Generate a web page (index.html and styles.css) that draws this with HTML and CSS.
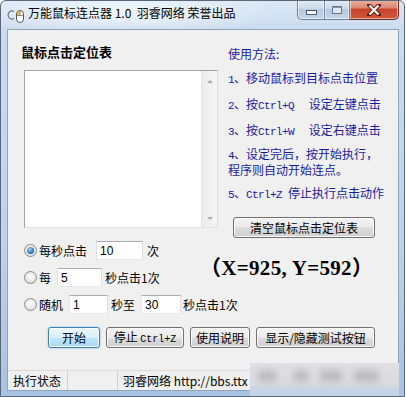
FILE: index.html
```html
<!doctype html>
<html>
	<head>
		<meta charset="utf-8" />
		<title>万能鼠标连点器 1.0</title>
		<link rel="stylesheet" href="styles.css">
	</head>
	<body>
		<div class="window">
			<div class="titlebar">
				<svg class="appicon" width="18" height="18" viewBox="0 0 18 18">
					<path d="M7 5.5 A4 4 0 1 0 7 12.5" fill="none" stroke="#707070" stroke-width="1.2" />
					<rect x="9.5" y="4.5" width="7" height="12" rx="3.5" fill="#fff" stroke="#555" />
					<path d="M13 5 A3 3 0 0 0 10 8 V9.5 H13 Z" fill="#f2c21b" />
					<path d="M13 4.5 V9.5 M9.5 9.5 H16.5" stroke="#777" stroke-width=".8" />
				</svg>
				<span class="title">万能鼠标连点器 1.0&nbsp; 羽睿网络 荣誉出品</span>
				<div class="caption">
					<span class="cbtn min"><i></i></span>
					<span class="cbtn max"><i></i></span>
					<span class="cbtn close">
						<svg width="14" height="12" viewBox="0 0 14 12">
							<path d="M2 1 L12 11 M12 1 L2 11" stroke="#5a1d14" stroke-width="4" stroke-linecap="square" />
							<path d="M2.5 1.5 L11.5 10.5 M11.5 1.5 L2.5 10.5" stroke="#fff" stroke-width="2.2" />
						</svg>
					</span>
				</div>
			</div>

			<div class="client">
				<div class="top">
					<div class="list-panel">
						<h1>鼠标点击定位表</h1>
						<div class="listbox">
							<div class="scroll"><span class="arr up"></span><span class="arr down"></span></div>
						</div>
					</div>
					<div class="help">
						<p>使用方法:</p>
						<p><span class="mono">1</span>、移动鼠标到目标点击位置</p>
						<p><span class="mono">2</span>、按<span class="mono">Ctrl+Q&nbsp;&nbsp;</span> 设定左键点击</p>
						<p><span class="mono">3</span>、按<span class="mono">Ctrl+W&nbsp;&nbsp;</span> 设定右键点击</p>
						<p class="two"><span class="mono">4</span>、设定完后，按开始执行，<br>程序则自动开始连点。</p>
						<p class="last"><span class="mono">5</span>、<span class="mono">Ctrl+Z </span>停止执行点击动作</p>
						<button class="btn clear">清空鼠标点击定位表</button>
					</div>
				</div>

				<div class="middle">
					<div class="row r1">
						<span class="radio on"></span><span>每秒点击</span>
						<input class="field f1" type="text" value="10"><span>次</span>
					</div>
					<div class="row r2">
						<span class="radio"></span><span>每</span>
						<input class="field f2" type="text" value="5"><span>秒点击1次</span>
					</div>
					<div class="coords">（X=925, Y=592）</div>
					<div class="row r3">
						<span class="radio"></span><span>随机</span>
						<input class="field f3" type="text" value="1"><span>秒至</span>
						<input class="field f4" type="text" value="30"><span>秒点击1次</span>
					</div>
				</div>

				<div class="actions">
					<button class="btn focus b-start">开始</button>
					<button class="btn b-stop">停止 <span class="mono">Ctrl+Z</span></button>
					<button class="btn b-help">使用说明</button>
					<button class="btn b-toggle">显示/隐藏测试按钮</button>
				</div>

				<div class="status">
					<span class="cell c1">执行状态</span>
					<span class="cell c2"></span>
					<span class="cell c3">羽睿网络 http://bbs.ttx</span>
				</div>
			</div>

			<!-- blurred watermark over the corner -->
			<div class="watermark">
				<span class="blob" style="left:8px;width:18px"></span>
				<span class="blob" style="left:44px;width:14px"></span>
				<span class="blob" style="left:70px;width:22px"></span>
				<span class="blob" style="left:104px;width:24px"></span>
			</div>
		</div>
	</body>
</html>
```

FILE: styles.css
```css
body {
	margin: 0;
	background: #fff;
	font-family: "Noto Sans CJK SC", sans-serif;
	font-size: 12px;
	color: #000;
}
.window {
	position: relative;
	width: 405px;
	height: 397px;
	box-sizing: border-box;
	border: 1px solid #59677a;
	border-radius: 6px 6px 0 0;
	background: linear-gradient(to bottom, #dce8f5 0, #c9dbef 30px, #bed3ea 60%, #a9c3e0 100%);
	display: flex;
	flex-direction: column;
	overflow: hidden;
}
.titlebar {
	height: 29px;
	flex-shrink: 0;
	display: flex;
	align-items: flex-start;
	background: radial-gradient(ellipse 160px 22px at 120px 12px, rgba(255,255,255,.7), rgba(255,255,255,0));
}
.appicon {
	margin: 5px 3px 0 6px;
}
.title {
	margin-top: 5px;
	line-height: 14px;
	font-size: 12px;
}
.caption {
	margin-left: auto;
	margin-right: 5px;
	margin-top: -1px;
	display: flex;
}
.cbtn {
	height: 20px;
	box-sizing: border-box;
	border: 1px solid #6f8298;
	border-top: none;
	display: flex;
	align-items: center;
	justify-content: center;
	box-shadow: inset 0 0 0 1px rgba(255,255,255,.55);
}
.cbtn.min {
	width: 27px;
	border-radius: 0 0 0 5px;
	border-right: none;
	background: linear-gradient(#e4ecf5 0, #ccdaea 45%, #b5c8de 50%, #c5d6e9 100%);
}
.cbtn.max {
	width: 26px;
	background: linear-gradient(#e4ecf5 0, #ccdaea 45%, #b5c8de 50%, #c5d6e9 100%);
}
.cbtn.min i {
	width: 9px;
	height: 3px;
	margin-top: 6px;
	background: #fff;
	border: 1px solid #4a5868;
}
.cbtn.max i {
	width: 8px;
	height: 6px;
	border: 1px solid #6a7a8c;
	background: #dfe8f2;
	box-shadow: inset 0 1px 0 #8898aa;
}
.cbtn.close {
	width: 49px;
	border-color: #6b2a20;
	border-left: none;
	border-radius: 0 0 5px 0;
	background: linear-gradient(#eab0a2 0, #dc8a73 40%, #c8432b 50%, #d2583c 100%);
}
.client {
	margin: 0 6px 6px 7px;
	height: 360px;
	flex-shrink: 0;
	background: #f0f0f0;
	outline: 1px solid #8fa4bb;
}
.top {
	display: flex;
	height: 200px;
}
.list-panel {
	width: 210px;
	box-sizing: border-box;
	padding: 14px 0 0 13px;
}
h1 {
	margin: 0;
	font-size: 13px;
	font-weight: bold;
	line-height: 16px;
}
.listbox {
	margin: 10px 0 0 3px;
	width: 194px;
	height: 158px;
	box-sizing: border-box;
	border: 1px solid #a3a3a3;
	border-right-color: #dcdcdc;
	border-bottom-color: #e3e3e3;
	background: #fff;
	display: flex;
	justify-content: flex-end;
}
.scroll {
	width: 15px;
	border-left: 1px solid #e6e6e6;
	background: linear-gradient(to right, #ebebeb, #f6f6f6);
	display: flex;
	flex-direction: column;
	justify-content: space-between;
	align-items: center;
	padding: 9px 0 7px;
}
.arr {
	width: 0;
	height: 0;
	border-left: 3px solid transparent;
	border-right: 3px solid transparent;
}
.arr.up {
	border-bottom: 3px solid #a8a8a8;
}
.arr.down {
	border-top: 3px solid #a8a8a8;
}
.help {
	margin-left: 10px;
	padding-top: 12px;
	color: #1a1aa6;
}
.help p {
	margin: 0;
	line-height: 24px;
	white-space: nowrap;
}
.help p.two {
	margin-top: 3px;
	line-height: 14px;
}
.help p.last {
	margin-top: 4px;
}
.mono {
	font-family: "Liberation Mono", monospace;
	font-size: 10px;
}
.help .mono {
	font-size: 11px;
	letter-spacing: -0.6px;
}
.btn {
	height: 21px;
	box-sizing: border-box;
	padding: 0;
	border: 1px solid #707070;
	border-radius: 3px;
	background: linear-gradient(#f2f2f2 0, #ebebeb 50%, #dddddd 50%, #cfcfcf 100%);
	box-shadow: inset 0 0 0 1px #fbfbfb;
	font-family: "Noto Sans CJK SC", sans-serif;
	font-size: 12px;
	line-height: 18px;
	color: #000;
}
.btn.focus {
	border-color: #3c7fb1;
	background: linear-gradient(#eaf6fd 0, #d9f0fc 50%, #bee6fd 50%, #a7d9f5 100%);
	box-shadow: inset 0 0 0 1px #fff, 0 0 2px #6fb6e8;
}
.btn.clear {
	margin: 10px 0 0 5px;
	width: 142px;
}
.middle {
	display: grid;
	grid-template-columns: 192px 1fr;
	grid-template-rows: 27px 27px 27px;
	margin-top: 7px;
}
.row {
	display: flex;
	align-items: center;
	padding-left: 16px;
	white-space: nowrap;
}
.row.r3 {
	grid-column: 1 / -1;
}
.radio {
	position: relative;
	width: 13px;
	height: 13px;
	box-sizing: border-box;
	border: 1px solid #8a8a8a;
	border-radius: 50%;
	background: radial-gradient(circle at 50% 40%, #fff, #d4d4d4);
	margin-right: 2px;
	flex-shrink: 0;
}
.radio.on::after {
	content: "";
	position: absolute;
	inset: 2px;
	border-radius: 50%;
	background: radial-gradient(circle at 40% 35%, #a6d8f6, #1d64ad 70%);
}
.field {
	height: 19px;
	box-sizing: border-box;
	border: 1px solid;
	border-color: #abadb3 #dbdfe6 #e3e9ef #e2e3ea;
	background: #fff;
	padding: 0 3px;
	font-family: "Liberation Sans", sans-serif;
	font-size: 12px;
	color: #000;
}
.f1 {
	width: 47px;
	margin: 0 4px 0 9px;
}
.f2 {
	width: 45px;
	margin: 0 3px 0 6px;
}
.f3 {
	width: 39px;
	margin: 0 3px 0 6px;
}
.f4 {
	width: 40px;
	margin: 0 2px 0 6px;
}
.coords {
	grid-column: 2;
	grid-row: 1 / span 2;
	align-self: center;
	margin-top: 8px;
	font-family: "Liberation Serif", "Noto Sans CJK SC", serif;
	font-weight: bold;
	font-size: 21px;
	letter-spacing: 0.3px;
	line-height: 24px;
	white-space: nowrap;
}
.actions {
	display: flex;
	gap: 6px;
	padding-left: 40px;
	margin-top: 9px;
}
.b-start {
	width: 52px;
}
.b-stop {
	width: 78px;
}
.b-help {
	width: 60px;
}
.b-toggle {
	width: 119px;
}
.status {
	display: flex;
	margin-top: 22px;
	height: 20px;
	border-top: 1px solid #dadada;
	box-sizing: border-box;
}
.cell {
	display: flex;
	align-items: center;
	border-right: 1px solid #cfcfcf;
	white-space: nowrap;
}
.c1 {
	width: 60px;
	padding-left: 5px;
	box-sizing: border-box;
}
.c2 {
	width: 49px;
}
.c3 {
	padding-left: 5px;
	border-right: none;
}
.watermark {
	position: absolute;
	left: 249px;
	top: 362px;
	width: 149px;
	height: 35px;
	background: linear-gradient(to bottom, #e0e0e4 0, #dadade 64%, #c9d6e8 68%, #c3d2e6 100%);
}
.blob {
	position: absolute;
	top: 7px;
	height: 12px;
	background: #bdbdc2;
	filter: blur(3px);
}
```
